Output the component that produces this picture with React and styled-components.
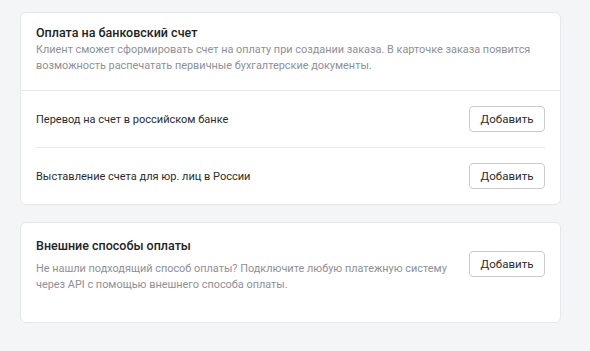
import React from "react"
import styled, { createGlobalStyle } from "styled-components"

const GlobalStyle = createGlobalStyle`
  html, body {
    margin: 0;
    padding: 0;
    background: #f4f5f7;
    font-family: Roboto, "Noto Sans", sans-serif;
    -webkit-font-smoothing: antialiased;
  }
`

const Page = styled.div`
  display: flex;
  flex-direction: column;
  gap: 17px;
  width: 541px;
  padding: 12px 0 0 20px;
`

const Card = styled.section`
  background: #fff;
  border: 1px solid #e6e7ea;
  border-radius: 6px;
  box-sizing: border-box;
`

const Header = styled.div`
  padding: 12px 15px 16px;
  border-bottom: 1px solid #e8e9ec;
`

const Title = styled.h3`
  margin: 0 0 ${p => p.$gap || 1}px;
  font-size: 12.5px;
  line-height: 16px;
  font-weight: 500;
  color: #222326;
`

const Description = styled.p`
  margin: 0;
  font-size: 10.9px;
  line-height: 16px;
  color: #8e9097;
  white-space: nowrap;
`

const Rows = styled.div`
  padding: 0 15px;
`

const Row = styled.div`
  display: flex;
  align-items: center;
  justify-content: space-between;
  height: 56px;
  & + & {
    border-top: 1px solid #e8e9ec;
  }
`

const RowLabel = styled.span`
  font-size: 11px;
  color: #2b2c30;
`

const AddButton = styled.button`
  width: 76px;
  height: 26px;
  flex-shrink: 0;
  margin-top: ${p => p.$offset || 0}px;
  background: #fff;
  border: 1px solid #c8cbd0;
  border-radius: 4px;
  font-family: inherit;
  font-size: 11.5px;
  color: #2b2c30;
  cursor: pointer;
`

const External = styled.div`
  display: flex;
  align-items: flex-start;
  justify-content: space-between;
  gap: 20px;
  padding: 15px 15px 29px;
`

const ExternalText = styled.div`
  display: flex;
  flex-direction: column;
`

const methods = [
  "Перевод на счет в российском банке",
  "Выставление счета для юр. лиц в России",
]

export default function App() {
  return (
    <>
      <GlobalStyle />
      <Page>
        <Card>
          <Header>
            <Title>Оплата на банковский счет</Title>
            <Description>
              Клиент сможет сформировать счет на оплату при создании заказа. В карточке заказа появится
              <br />
              возможность распечатать первичные бухгалтерские документы.
            </Description>
          </Header>
          <Rows>
            {methods.map(m => (
              <Row key={m}>
                <RowLabel>{m}</RowLabel>
                <AddButton>Добавить</AddButton>
              </Row>
            ))}
          </Rows>
        </Card>
        <Card>
          <External>
            <ExternalText>
              <Title $gap={7}>Внешние способы оплаты</Title>
              <Description>
                Не нашли подходящий способ оплаты? Подключите любую платежную систему
                <br />
                через API с помощью внешнего способа оплаты.
              </Description>
            </ExternalText>
            <AddButton $offset={13}>Добавить</AddButton>
          </External>
        </Card>
      </Page>
    </>
  )
}
